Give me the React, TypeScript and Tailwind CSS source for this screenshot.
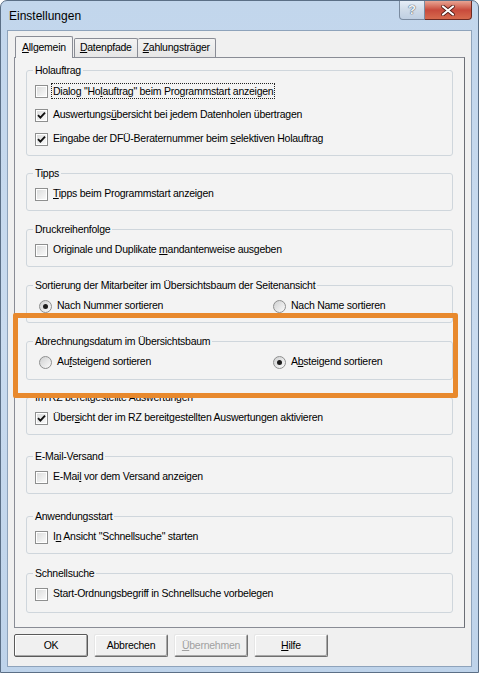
import React from "react";

// "&" marks the mnemonic letter, as in the Win32 resource strings
function Mn({ t }: { t: string }) {
  const i = t.indexOf("&");
  if (i < 0) return <>{t}</>;
  return (
    <>
      {t.slice(0, i)}
      <span className="underline underline-offset-[1px]">{t[i + 1]}</span>
      {t.slice(i + 2)}
    </>
  );
}

function Check({ on }: { on?: boolean }) {
  return (
    <span className="w-[13px] h-[13px] shrink-0 border border-[#8e8f8f] bg-white p-[1px] flex">
      <span className="flex-1 bg-gradient-to-br from-[#dcdddd] to-[#f9f9f9] flex items-center justify-center">
        {on && (
          <svg width="9" height="9" viewBox="0 0 9 9">
            <path d="M1 4.2 L3.4 6.6 L8 1.6" stroke="#111" strokeWidth="1.9" fill="none" />
          </svg>
        )}
      </span>
    </span>
  );
}

function Radio({ on }: { on?: boolean }) {
  return (
    <span className="w-[13px] h-[13px] shrink-0 rounded-full border border-[#8e8f8f] bg-gradient-to-br from-[#cfd0d1] to-[#fbfbfb] flex items-center justify-center">
      {on && <span className="w-[5px] h-[5px] rounded-full bg-[#1c1c1c]" />}
    </span>
  );
}

function Group({ title, children, extra }: { title: string; children: React.ReactNode; extra?: string }) {
  return (
    <fieldset className={`border border-[#cfd6dc] rounded-[3px] px-[8px] pb-[8px] ${extra ?? ""}`}>
      <legend className="px-[2px] -ml-[2px] leading-[13px]">{title}</legend>
      <div className="pt-[6px] flex flex-col gap-[8px]">{children}</div>
    </fieldset>
  );
}

function CheckRow({ label, on, focus }: { label: string; on?: boolean; focus?: boolean }) {
  return (
    <div className="h-[16px] flex items-center gap-[5px]">
      <Check on={on} />
      <span className={focus ? "outline outline-1 outline-dotted outline-[#222] px-[1px] -ml-[1px] leading-[14px]" : ""}>
        <Mn t={label} />
      </span>
    </div>
  );
}

function RadioPair({ a, b, sel }: { a: string; b: string; sel: 0 | 1 }) {
  return (
    <div className="h-[16px] flex items-center">
      <div className="w-[238px] pl-[4px] flex items-center gap-[5px]">
        <Radio on={sel === 0} />
        <span><Mn t={a} /></span>
      </div>
      <div className="flex items-center gap-[5px]">
        <Radio on={sel === 1} />
        <span><Mn t={b} /></span>
      </div>
    </div>
  );
}

function Btn({ label, def, disabled }: { label: string; def?: boolean; disabled?: boolean }) {
  return (
    <div
      className={`w-[74px] h-[23px] flex items-center justify-center rounded-[2px] bg-[#f0f0f0] border ${
        def ? "border-[#5a5a5a]" : "border-t-[#e6e6e6] border-l-[#e6e6e6] border-r-[#6f6f6f] border-b-[#6f6f6f]"
      } shadow-[inset_-1px_-1px_0_#a8a8a8,inset_1px_1px_0_#ffffff] ${disabled ? "text-[#a0a0a0]" : "text-black"}`}
    >
      <Mn t={label} />
    </div>
  );
}

export default function App() {
  return (
    <div className="w-[479px] h-[673px] relative overflow-hidden font-['Liberation_Sans',Arial,sans-serif] text-[10.5px] tracking-[-0.25px] text-black">
      <div className="w-full h-full flex flex-col rounded-t-[7px] border border-[#5b6f86] bg-gradient-to-b from-[#c2d6ec] via-[#c9dbef] to-[#bed3ea]">
        {/* title bar */}
        <div className="h-[29px] flex justify-between">
          <span className="self-center pl-[8px] pt-[1px] text-[12px] tracking-normal">Einstellungen</span>
          <div className="flex mr-[6px]">
            <div className="w-[26px] h-[19px] rounded-bl-[4px] border border-t-0 border-[#7a8ba0] bg-gradient-to-b from-[#e6eef7] via-[#cfdbe8] to-[#bfcfe2] flex items-center justify-center">
              <span className="text-[13px] font-bold text-[#f4f6f9] [text-shadow:0_0_1px_#3b4a5c,0_0_1px_#3b4a5c] tracking-normal">?</span>
            </div>
            <div className="w-[47px] h-[19px] rounded-br-[4px] border border-t-0 border-l-0 border-[#6e2a22] bg-gradient-to-b from-[#e8a493] via-[#c84a3c] to-[#d66a4e] flex items-center justify-center">
              <svg width="14" height="11" viewBox="0 0 14 11">
                <path d="M2 1.5 L12 9.5 M12 1.5 L2 9.5" stroke="#4a1610" strokeWidth="3.6" strokeLinecap="round" />
                <path d="M2 1.5 L12 9.5 M12 1.5 L2 9.5" stroke="#ffffff" strokeWidth="2.2" strokeLinecap="round" />
              </svg>
            </div>
          </div>
        </div>

        {/* client area */}
        <div className="mx-[6px] h-[637px] border border-[#8ea3bb] bg-[#f0f0f0] flex flex-col px-[6px] pt-[5px]">
          {/* tabs */}
          <div className="h-[21px] flex items-end">
            <div className="relative z-10 h-[22px] -mb-[1px] ml-[1px] px-[6px] border border-b-0 border-[#898c95] bg-[#f3f3f3] flex items-center rounded-t-[2px]">
              <Mn t="&Allgemein" />
            </div>
            <div className="h-[19px] ml-[1px] px-[5px] border border-b-0 border-[#898c95] bg-gradient-to-b from-[#f3f3f3] to-[#e6e6e6] flex items-center rounded-t-[2px]">
              <Mn t="&Datenpfade" />
            </div>
            <div className="h-[19px] px-[5px] border border-b-0 border-l-0 border-[#898c95] bg-gradient-to-b from-[#f3f3f3] to-[#e6e6e6] flex items-center rounded-t-[2px]">
              <Mn t="&Zahlungsträger" />
            </div>
          </div>

          {/* tab page */}
          <div className="h-[571px] border border-[#898c95] border-r-[#6b6e75] bg-[#f3f3f3] px-[11px] pt-[6px] flex flex-col gap-[12px]">
            <Group title="Holauftrag">
              <CheckRow label={'Dialog "Ho&lauftrag" beim Programmstart anzeigen'} focus />
              <CheckRow label="Auswertungs&übersicht bei jedem Datenholen übertragen" on />
              <CheckRow label="Eingabe der DFÜ-Beraternummer beim &selektiven Holauftrag" on />
            </Group>
            <Group title="Tipps" extra="-mt-[1px]">
              <CheckRow label="&Tipps beim Programmstart anzeigen" />
            </Group>
            <Group title="Druckreihenfolge">
              <CheckRow label="Originale und Duplikate &mandantenweise ausgeben" />
            </Group>
            <Group title="Sortierung der Mitarbeiter im Übersichtsbaum der Seitenansicht">
              <RadioPair a="Nach Nummer sortieren" b="Nach Name sortieren" sel={0} />
            </Group>
            <Group title="Abrechnungsdatum im Übersichtsbaum" extra="pb-[9px]">
              <RadioPair a="Au&fsteigend sortieren" b="A&bsteigend sortieren" sel={1} />
            </Group>
            <Group title="Im RZ bereitgestellte Auswertungen" extra="-mt-[1px]">
              <CheckRow label="Über&sicht der im RZ bereitgestellten Auswertungen aktivieren" on />
            </Group>
            <Group title="E-Mail-Versand" extra="mt-[3px]">
              <CheckRow label="E-Mai&l vor dem Versand anzeigen" />
            </Group>
            <Group title="Anwendungsstart" extra="mt-[4px]">
              <CheckRow label={'I&n Ansicht "Schnellsuche" starten'} />
            </Group>
            <Group title="Schnellsuche" extra="mt-[1px] pb-[10px]">
              <CheckRow label="Start-Ordnungsbegriff in Schnellsuche vorbelegen" />
            </Group>
          </div>

          {/* buttons */}
          <div className="mt-[6px] flex gap-[6px]">
            <Btn label="OK" def />
            <Btn label="Abbrechen" />
            <Btn label="&Übernehmen" disabled />
            <Btn label="&Hilfe" />
          </div>
        </div>
      </div>

      {/* orange highlight annotation over the dialog */}
      <div className="absolute left-[13px] top-[313px] w-[445px] h-[85px] border-[5px] border-[#e8892d] rounded-[2px] pointer-events-none" />
    </div>
  );
}
